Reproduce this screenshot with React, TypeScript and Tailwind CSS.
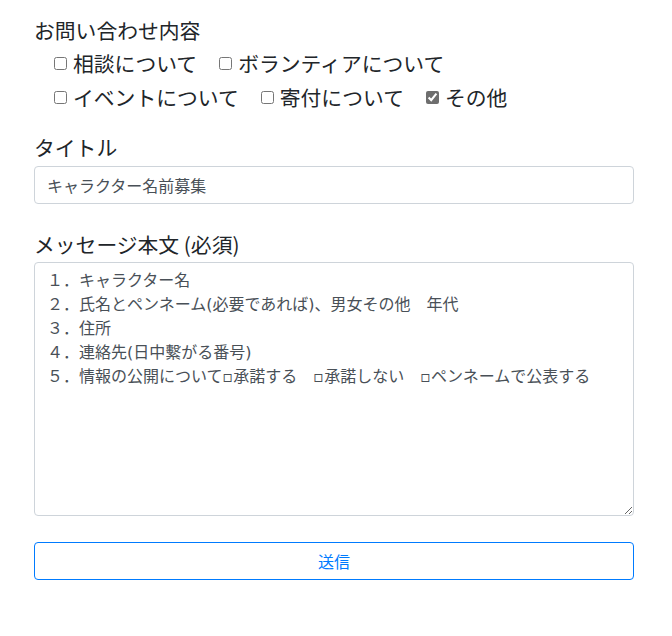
import React from "react";

const font = {
  fontFamily: '"Noto Sans CJK JP", "Noto Sans", sans-serif',
};

const taFont = {
  fontFamily: '"DejaVu Sans", "Noto Sans CJK JP", sans-serif',
};

function Check({ label, checked = false }: { label: string; checked?: boolean }) {
  return (
    <label className="flex items-center">
      <input
        type="checkbox"
        defaultChecked={checked}
        className="m-0 h-[13px] w-[13px] accent-[#6e6e6e]"
      />
      <span className="ml-[6px]">{label}</span>
    </label>
  );
}

export default function App() {
  const message =
    "１．キャラクター名\n２．氏名とペンネーム(必要であれば)、男女その他　年代\n３．住所\n４．連絡先(日中繫がる番号)\n５．情報の公開について▫承諾する　▫承諾しない　▫ペンネームで公表する";
  return (
    <div className="min-h-[636px] bg-white pt-[15px] text-[#212529]" style={font}>
      <div className="ml-[34px] w-[600px] flex flex-col">
        <div className="text-[20.8px] leading-[31px]">お問い合わせ内容</div>
        <div className="pl-[20px] text-[20.8px] leading-[31px]">
          <div className="flex h-[34px] items-center gap-[22px]">
            <Check label="相談について" />
            <Check label="ボランティアについて" />
          </div>
          <div className="flex h-[34px] items-center gap-[22px]">
            <Check label="イベントについて" />
            <Check label="寄付について" />
            <Check label="その他" checked />
          </div>
        </div>

        <div className="mt-[18px] text-[20.8px] leading-[31px]">タイトル</div>
        <input
          type="text"
          defaultValue="キャラクター名前募集"
          className="mt-[3px] h-[38px] w-full rounded-[4px] border border-[#ced4da] px-[12px] text-[16px] text-[#495057] outline-none"
          style={font}
        />

        <div className="mt-[25px] text-[20.8px] leading-[31px]">メッセージ本文 (必須)</div>
        <textarea
          defaultValue={message}
          className="mt-[2px] h-[254px] w-full rounded-[4px] border border-[#ced4da] px-[12px] py-[6px] text-[16px] leading-[24px] text-[#495057] outline-none"
          style={taFont}
        />

        <button
          type="button"
          className="mt-[26px] h-[38px] w-full rounded-[4px] border border-[#007bff] bg-white text-[16px] text-[#007bff]"
          style={font}
        >
          送信
        </button>
      </div>
    </div>
  );
}
